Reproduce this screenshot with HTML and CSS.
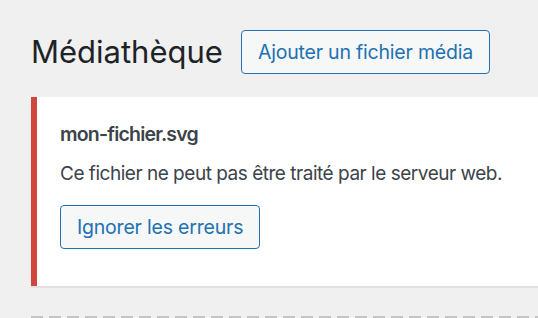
FILE: index.html
```html
<!DOCTYPE html>
<html lang="fr">
<head>
<meta charset="utf-8">
<title>Médiathèque</title>
<link rel="stylesheet" href="styles.css">
</head>
<body>
<div class="wrap">
  <div class="heading-row">
    <h1 class="page-title">Médiathèque</h1>
    <a class="page-title-action" href="#">Ajouter un fichier média</a>
  </div>
  <div class="notice notice-error">
    <p class="notice-file">mon-fichier.svg</p>
    <p class="notice-msg">Ce fichier ne peut pas être traité par le serveur web.</p>
    <button class="dismiss-button" type="button">Ignorer les erreurs</button>
  </div>
  <div class="drop-area"></div>
</div>
</body>
</html>
```

FILE: styles.css
```css
html, body {
  margin: 0;
  padding: 0;
  background: #f0f0f1;
  overflow: hidden;
}

body {
  font-family: Inter, "Noto Sans", sans-serif;
  color: #3c434a;
  width: 538px;
  height: 318px;
}

.wrap {
  padding: 30px 0 0 31px;
  margin-right: -60px;
}

.heading-row {
  display: flex;
  align-items: center;
  gap: 18px;
  height: 44px;
}

.page-title {
  margin: 0;
  font-size: 31px;
  font-weight: 400;
  line-height: 44px;
  color: #1d2327;
}

.page-title-action {
  box-sizing: border-box;
  display: flex;
  align-items: center;
  height: 44px;
  padding: 0 16px;
  border: 1px solid #2271b1;
  border-radius: 4px;
  background: #f6f7f7;
  color: #2271b1;
  font-size: 19.5px;
  letter-spacing: -0.2px;
  text-decoration: none;
}

.notice {
  margin-top: 23px;
  background: #fff;
  border-left: 6px solid #d0463c;
  box-shadow: 0 2px 1px rgba(0, 0, 0, 0.06);
  padding: 22px 0 37px 23px;
}

.notice p {
  margin: 0;
  font-size: 19.5px;
  line-height: 30px;
}

.notice-file {
  font-weight: 600;
  letter-spacing: -0.8px;
  color: #3c434a;
}

.notice-msg {
  margin-top: 10px !important;
  font-size: 19px !important;
  letter-spacing: -0.48px;
}

.dismiss-button {
  box-sizing: border-box;
  display: block;
  margin-top: 16px;
  height: 44px;
  padding: 0 16px;
  border: 1px solid #2271b1;
  border-radius: 4px;
  background: #f6f7f7;
  color: #2271b1;
  font-family: inherit;
  font-size: 19.5px;
  letter-spacing: -0.2px;
}

.drop-area {
  margin-top: 30px;
  height: 6px;
  background: repeating-linear-gradient(90deg, #c3c4c7 0 12px, transparent 12px 18px);
}
```
